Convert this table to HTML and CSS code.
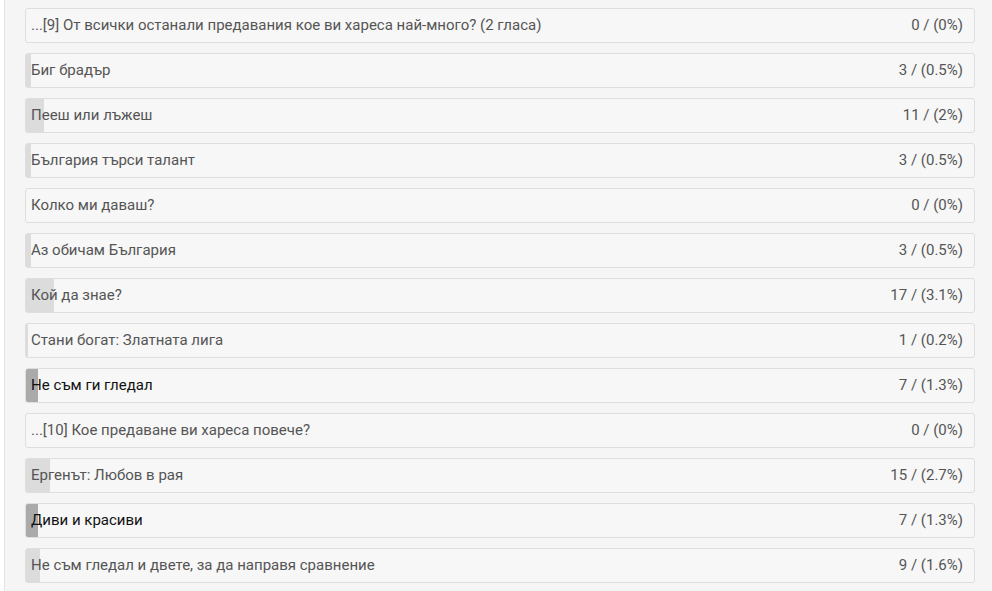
FILE: index.html
```html
<!DOCTYPE html>
<html lang="bg">
<head>
    <meta charset="UTF-8">
    <meta name="viewport" content="width=device-width, initial-scale=1.0">
    <title>Резултати от анкетата</title>
    <link rel="stylesheet" href="styles.css">
</head>
<body>
    <div class="results">
        <div class="answer question" style="--p: 0%"><span>...[9] От всички останали предавания кое ви хареса най-много? (2 гласа)</span><span>0 / (0%)</span></div>
        <div class="answer" style="--p: 0.5%"><span>Биг брадър</span><span>3 / (0.5%)</span></div>
        <div class="answer" style="--p: 2%"><span>Пееш или лъжеш</span><span>11 / (2%)</span></div>
        <div class="answer" style="--p: 0.5%"><span>България търси талант</span><span>3 / (0.5%)</span></div>
        <div class="answer" style="--p: 0%"><span>Колко ми даваш?</span><span>0 / (0%)</span></div>
        <div class="answer" style="--p: 0.5%"><span>Аз обичам България</span><span>3 / (0.5%)</span></div>
        <div class="answer" style="--p: 3.1%"><span>Кой да знае?</span><span>17 / (3.1%)</span></div>
        <div class="answer" style="--p: 0.2%"><span>Стани богат: Златната лига</span><span>1 / (0.2%)</span></div>
        <div class="answer mine" style="--p: 1.3%"><span class="label">Не съм ги гледал</span><span>7 / (1.3%)</span></div>
        <div class="answer question" style="--p: 0%"><span>...[10] Кое предаване ви хареса повече?</span><span>0 / (0%)</span></div>
        <div class="answer" style="--p: 2.7%"><span>Ергенът: Любов в рая</span><span>15 / (2.7%)</span></div>
        <div class="answer mine" style="--p: 1.3%"><span class="label">Диви и красиви</span><span>7 / (1.3%)</span></div>
        <div class="answer" style="--p: 1.6%"><span>Не съм гледал и двете, за да направя сравнение</span><span>9 / (1.6%)</span></div>
    </div>
</body>
</html>
```

FILE: styles.css
```css
* {
    margin: 0;
    padding: 0;
    box-sizing: border-box;
}

body {
    font-family: Roboto, "Liberation Sans", sans-serif;
    background: #fff;
}

.results {
    margin-left: 4px;
    min-height: 100vh;
    border-left: 1px solid #e2e2e2;
    background: #f5f5f5;
    padding: 8px 17px 8px 20px;
    display: flex;
    flex-direction: column;
    gap: 10px;
}

/* bar fill is drawn as a gradient, width comes from --p */
.answer {
    --bar: #dcdcdc;
    --w: calc(var(--p) * 0.95);
    height: 35px;
    display: flex;
    justify-content: space-between;
    align-items: center;
    padding: 0 11px 1px 5px;
    border: 1px solid #dedede;
    border-radius: 3px;
    background: linear-gradient(to right, var(--bar) var(--w), #f7f7f7 var(--w));
    color: #555;
    font-size: 15px;
}

.answer.mine {
    --bar: #aaaaaa;
}

.answer.mine .label {
    color: #111;
}
```
